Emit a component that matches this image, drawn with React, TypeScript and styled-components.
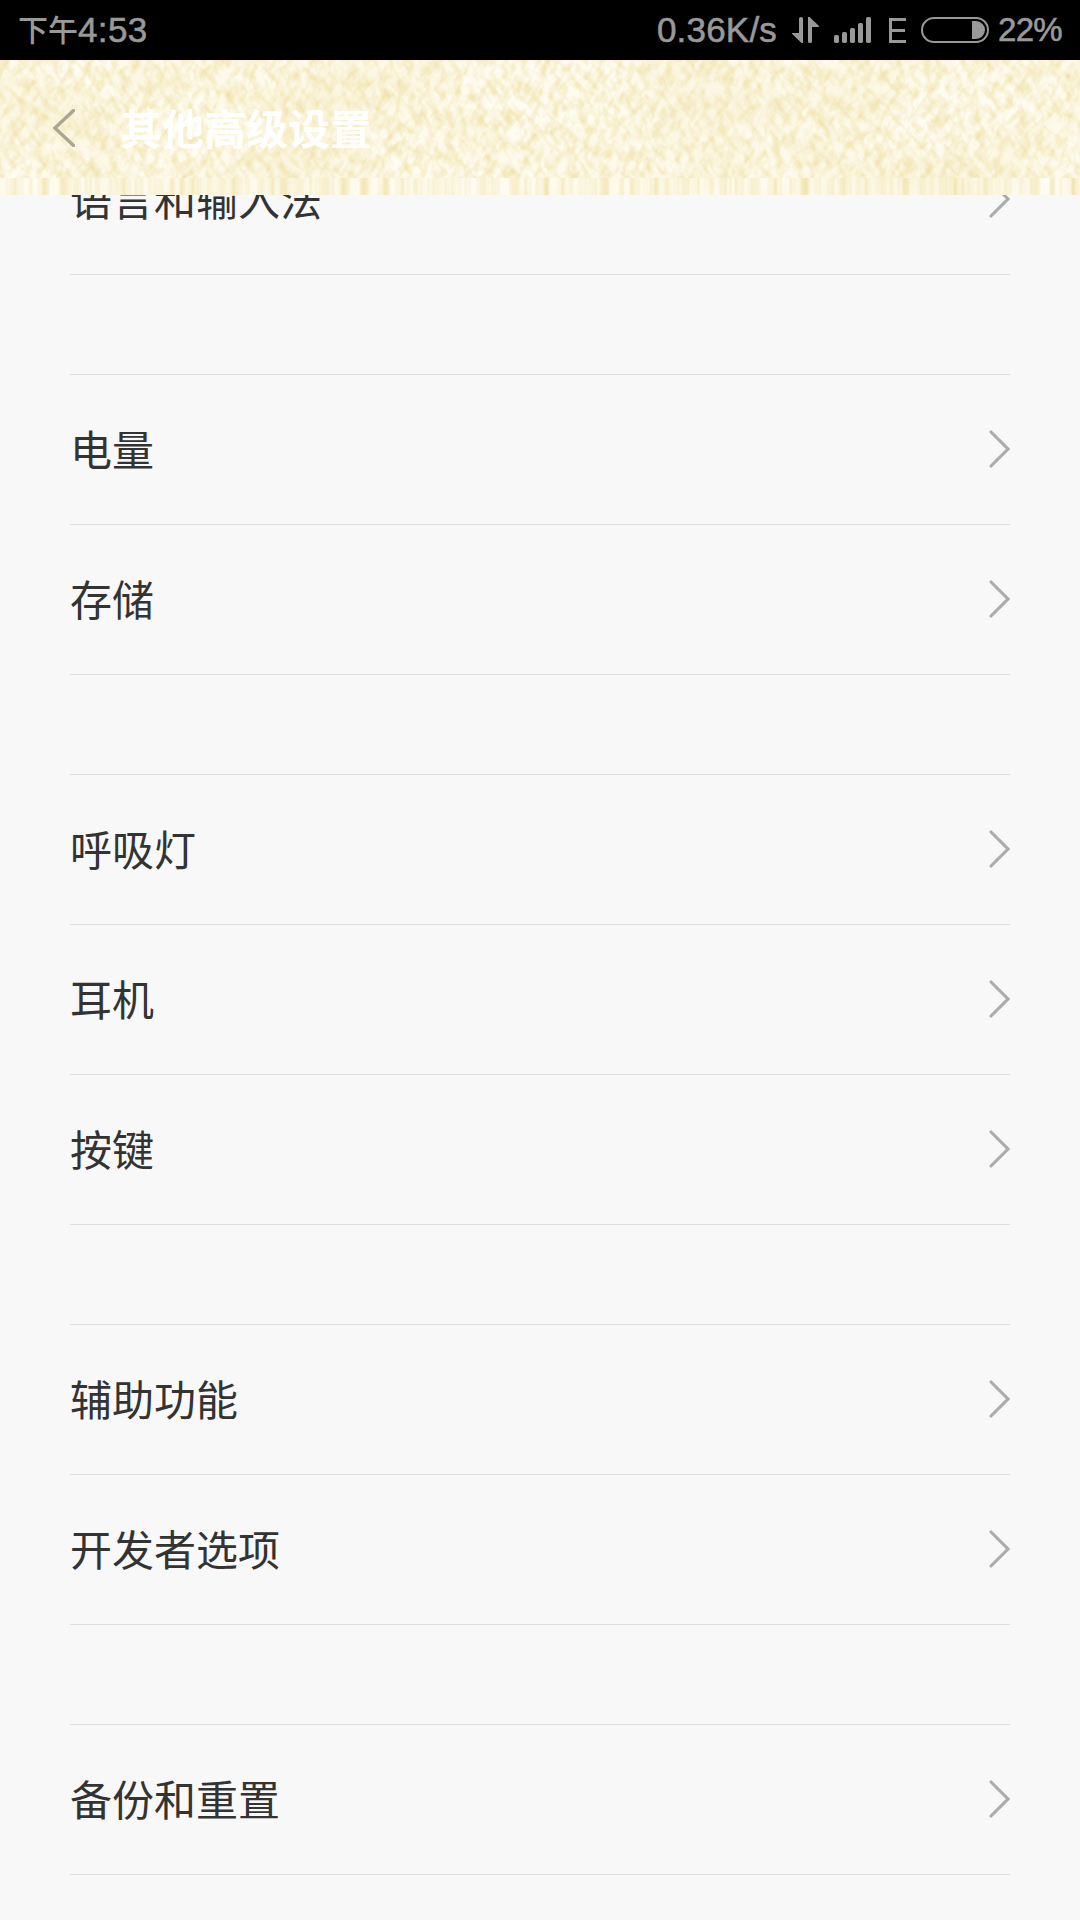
import React from "react";
import styled, { createGlobalStyle } from "styled-components";

const GlobalStyle = createGlobalStyle`
  body {
    margin: 0;
    background: #f8f8f8;
  }
  * {
    box-sizing: border-box;
  }
`;

const Screen = styled.div`
  width: 1080px;
  height: 1920px;
  display: flex;
  flex-direction: column;
  overflow: hidden;
  background: #f8f8f8;
  font-family: "Liberation Sans", "Noto Sans CJK SC", sans-serif;
`;

const StatusBar = styled.header`
  flex: none;
  height: 60px;
  padding: 0 18px;
  display: flex;
  align-items: center;
  justify-content: space-between;
  background: #000;
  color: #999;
`;

const Clock = styled.div`
  display: flex;
  align-items: center;
  line-height: 60px;
`;

const ClockPeriod = styled.span`
  margin-top: -4px;
  font-family: "Noto Sans CJK SC", sans-serif;
  font-size: 30px;
  font-weight: 500;
`;

const StatusText = styled.span<{ $size: number; $gap?: number; $spacing?: number }>`
  font-size: ${(p) => p.$size}px;
  line-height: 60px;
  margin-left: ${(p) => p.$gap ?? 0}px;
  letter-spacing: ${(p) => p.$spacing ?? 0}px;
  -webkit-text-stroke: 0.6px #999;
`;

const StatusIcons = styled.div`
  display: flex;
  align-items: center;
`;

const Glyph = styled.svg<{ $gap: number }>`
  display: block;
  flex: none;
  margin-left: ${(p) => p.$gap}px;
`;

const TitleBar = styled.div`
  flex: none;
  position: relative;
  height: 135px;
  padding-left: 53px;
  display: flex;
  align-items: center;
  background: #fefcf2;
`;

const Fabric = styled.svg`
  position: absolute;
  inset: 0;
`;

const BackIcon = styled.svg`
  position: relative;
  display: block;
  flex: none;
`;

const Title = styled.h1`
  position: relative;
  margin: 0 0 1px 45px;
  font-family: "Noto Sans CJK SC", sans-serif;
  font-size: 42px;
  font-weight: 700;
  line-height: 60px;
  color: #fff;
`;

const ListViewport = styled.main`
  flex: 1;
  min-height: 0;
  overflow: hidden;
`;

const List = styled.div`
  margin-top: -70px;
  padding: 0 70px;
`;

const Section = styled.section`
  & + & {
    padding-top: 99px;
  }
  & + & > :first-child {
    height: 151px;
    border-top: 1px solid #dedede;
  }
`;

const Row = styled.div`
  height: 150px;
  padding-bottom: 2px;
  display: flex;
  align-items: center;
  justify-content: space-between;
  border-bottom: 1px solid #dedede;
`;

const Label = styled.span`
  padding-bottom: 1px;
  font-family: "Noto Sans CJK SC", sans-serif;
  font-size: 42px;
  line-height: 60px;
  color: #333;
`;

const Chevron = styled.svg`
  display: block;
  flex: none;
`;

const sections: string[][] = [
  ["语言和输入法"],
  ["电量", "存储"],
  ["呼吸灯", "耳机", "按键"],
  ["辅助功能", "开发者选项"],
  ["备份和重置"],
];

function FabricTexture() {
  return (
    <Fabric width="1080" height="135" viewBox="0 0 1080 135">
      <defs>
        <filter id="weave" x="0" y="0" width="100%" height="100%" colorInterpolationFilters="sRGB">
          <feTurbulence type="fractalNoise" baseFrequency="0.15 0.06" numOctaves="3" seed="7" />
          <feColorMatrix values="0 0 0 0 0.91  0 0 0 0 0.82  0 0 0 0 0.47  1.8 0 0 0 -0.76" />
        </filter>
        <filter id="cloud" x="0" y="0" width="100%" height="100%" colorInterpolationFilters="sRGB">
          <feTurbulence type="fractalNoise" baseFrequency="0.008 0.014" numOctaves="2" seed="12" />
          <feColorMatrix values="0 0 0 0 0.95  0 0 0 0 0.89  0 0 0 0 0.68  0.6 0 0 0 -0.22" />
        </filter>
        <filter id="threads" x="0" y="0" width="100%" height="100%" colorInterpolationFilters="sRGB">
          <feTurbulence type="fractalNoise" baseFrequency="0.1 0.00001" numOctaves="3" seed="21" />
          <feColorMatrix values="0 0 0 0 0.93  0 0 0 0 0.85  0 0 0 0 0.56  1.7 0 0 0 -0.67" />
        </filter>
        <clipPath id="cloth">
          <rect width="1080" height="118" />
        </clipPath>
      </defs>
      <g clipPath="url(#cloth)">
        <g transform="rotate(32 540 60)">
          <rect x="-100" y="-400" width="1280" height="920" filter="url(#weave)" opacity="0.55" />
        </g>
        <g transform="rotate(-32 540 60)">
          <rect x="-100" y="-400" width="1280" height="920" filter="url(#weave)" opacity="0.55" />
        </g>
      </g>
      <rect y="118" width="1080" height="17" filter="url(#threads)" />
      <rect width="1080" height="135" filter="url(#cloud)" />
    </Fabric>
  );
}

export default function App() {
  return (
    <>
      <GlobalStyle />
      <Screen>
        <StatusBar>
          <Clock>
            <ClockPeriod>下午</ClockPeriod>
            <StatusText $size={35} $spacing={0.4}>
              4:53
            </StatusText>
          </Clock>
          <StatusIcons>
            <StatusText $size={35} $spacing={0.2}>
              0.36K/s
            </StatusText>
            <Glyph $gap={15} width="28" height="26" viewBox="0 0 28 26" fill="#999">
              <path d="M7 1.5Q7 0 9 0Q11 0 11 1.5V26H9.5L0 16.8V16H7Z" />
              <path d="M16 0H17.5L27 9V10H20V24.5Q20 26 18 26Q16 26 16 24.5Z" />
            </Glyph>
            <Glyph $gap={14} width="37" height="26" viewBox="0 0 37 26" fill="#999">
              <rect x="0" y="18" width="5" height="8" rx="1.7" />
              <rect x="8" y="15" width="5" height="11" rx="1.7" />
              <rect x="16" y="11" width="5" height="15" rx="1.7" />
              <rect x="24" y="6" width="5" height="20" rx="1.7" />
              <rect x="32" y="0" width="5" height="26" rx="1.7" />
            </Glyph>
            <Glyph $gap={18} width="17" height="26" viewBox="0 0 17 26" fill="none" stroke="#999" strokeWidth="3">
              <path d="M17 2.5H1.5V24.5H17M1.5 13.5H16" />
            </Glyph>
            <Glyph $gap={15} width="68" height="26" viewBox="0 0 68 26">
              <rect x="1" y="1" width="66" height="24" rx="12" fill="none" stroke="#999" strokeWidth="2" />
              <path d="M51 4H55A9 9 0 0 1 55 22H51Z" fill="#999" />
            </Glyph>
            <StatusText $size={33} $gap={9} $spacing={-0.7}>
              22%
            </StatusText>
          </StatusIcons>
        </StatusBar>
        <TitleBar>
          <FabricTexture />
          <BackIcon width="22" height="38" viewBox="0 0 22 38" fill="none">
            <path d="M20.5 1.5L2 19L20.5 36.5" stroke="#aaa692" strokeWidth="3.4" strokeLinecap="round" />
          </BackIcon>
          <Title>其他高级设置</Title>
        </TitleBar>
        <ListViewport>
          <List>
            {sections.map((rows, i) => (
              <Section key={i}>
                {rows.map((label) => (
                  <Row key={label}>
                    <Label>{label}</Label>
                    <Chevron width="21" height="38" viewBox="0 0 21 38" fill="none">
                      <path d="M2 2L19 19L2 36" stroke="#ababab" strokeWidth="3.1" strokeLinecap="round" />
                    </Chevron>
                  </Row>
                ))}
              </Section>
            ))}
          </List>
        </ListViewport>
      </Screen>
    </>
  );
}
